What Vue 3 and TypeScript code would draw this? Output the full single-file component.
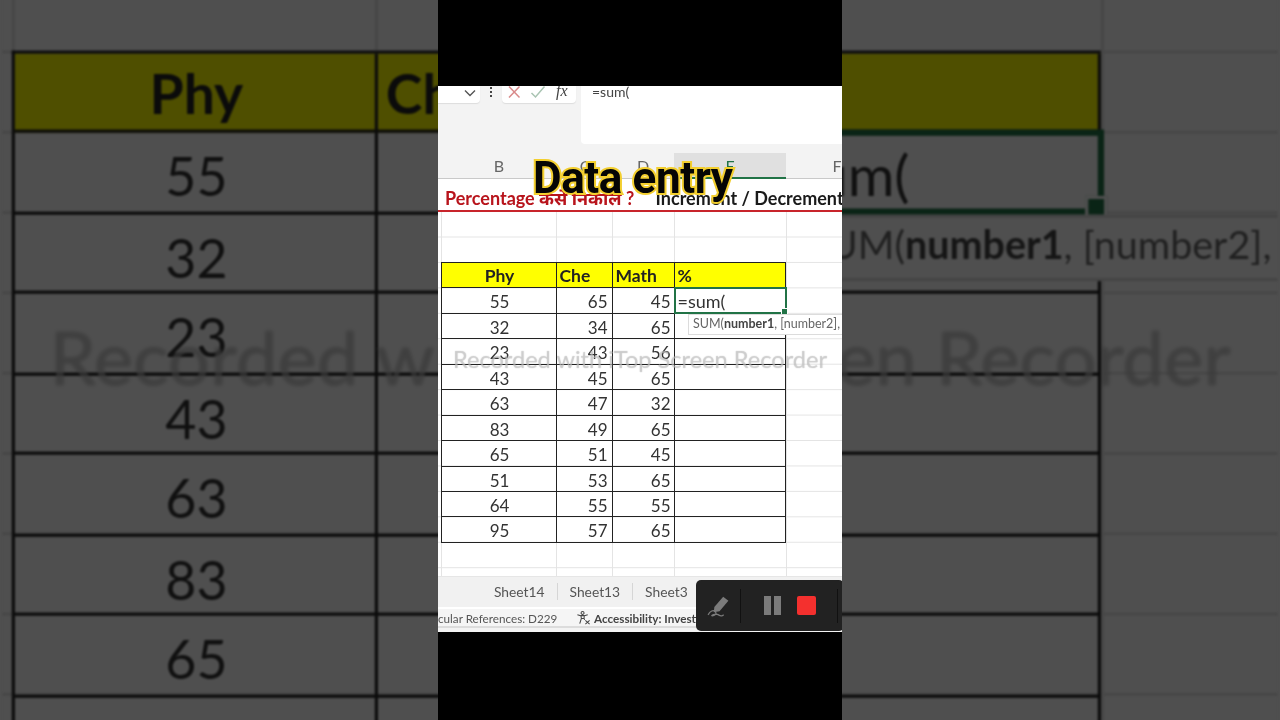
<script setup lang="ts">
interface Row { phy: number; che: number; math: number }
const rows: Row[] = [
  { phy: 55, che: 65, math: 45 },
  { phy: 32, che: 34, math: 65 },
  { phy: 23, che: 43, math: 56 },
  { phy: 43, che: 45, math: 65 },
  { phy: 63, che: 47, math: 32 },
  { phy: 83, che: 49, math: 65 },
  { phy: 65, che: 51, math: 45 },
  { phy: 51, che: 53, math: 65 },
  { phy: 64, che: 55, math: 55 },
  { phy: 95, che: 57, math: 65 },
]
const layers = ['back', 'front']
const columns = [
  { name: 'B', width: 118 },
  { name: 'C', width: 56 },
  { name: 'D', width: 62 },
  { name: 'E', width: 112 },
  { name: 'F', width: 102 },
]
const tabs = ['Sheet14', 'Sheet13', 'Sheet3']
</script>

<template>
  <div class="frame">
    <div v-for="layer in layers" :key="layer" class="phone" :class="layer">
      <div class="sheet">
        <div class="ribbon">
          <div class="name-box">
            <svg class="chev" viewBox="0 0 12 8" width="12" height="8"><path d="M1 1.5 6 6.5 11 1.5" fill="none" stroke="#555" stroke-width="1.4" /></svg>
          </div>
          <div class="dots"><i></i><i></i><i></i></div>
          <div class="fx-box">
            <svg viewBox="0 0 14 14" width="14" height="14"><path d="M2 1.5 12.5 12.5M12.5 1.5 2 12.5" stroke="#d98a8a" stroke-width="1.5" fill="none" /></svg>
            <svg viewBox="0 0 16 14" width="16" height="14"><path d="M1.5 8 5.5 12 14.5 1.5" stroke="#a9c4b2" stroke-width="1.5" fill="none" /></svg>
            <span class="fx">fx</span>
          </div>
          <div class="formula">=sum(</div>
        </div>
        <div class="col-heads">
          <div v-for="col in columns" :key="col.name" class="col-head" :class="{ on: col.name === 'E' }" :style="{ width: col.width + 'px' }">{{ col.name }}</div>
        </div>
        <div class="body">
          <div class="title"><span class="red">Percentage कैसे निकाले ?</span> Increment / Decrement</div>
          <div class="table">
            <div class="cell head center">Phy</div>
            <div class="cell head">Che</div>
            <div class="cell head">Math</div>
            <div class="cell head">%</div>
            <template v-for="(row, i) in rows" :key="row.phy + '-' + i">
              <div class="cell center">{{ row.phy }}</div>
              <div class="cell num">{{ row.che }}</div>
              <div class="cell num">{{ row.math }}</div>
              <div class="cell" :class="{ active: i === 0 }">
                <template v-if="i === 0">=sum(<span class="handle"></span></template>
              </div>
            </template>
          </div>
          <div class="tip">SUM(<b>number1</b>, [number2], [number3], ...)</div>
        </div>
        <div class="tabs">
          <div v-for="tab in tabs" :key="tab" class="tab">{{ tab }}</div>
        </div>
        <div class="status">
          <span class="refs">cular References: D229</span>
          <svg class="acc" viewBox="0 0 16 16" width="15" height="15"><path d="M7 1.5a1.6 1.6 0 1 1 0 3.2 1.6 1.6 0 0 1 0-3.2ZM1.5 5 5 6h4l3.5-1M5.3 6l.4 3L4 14.5M8.8 6l-.2 3 .6 1.5M5.7 9h2.9" fill="none" stroke="#444" stroke-width="1.1" /><path d="M10 11l4.5 4M14.5 11 10 15" stroke="#444" stroke-width="1.1" fill="none" /></svg>
          <b class="acc-text">Accessibility: Investigate</b>
        </div>
        <div class="mark">Recorded with iTop Screen Recorder</div>
        <div v-if="layer === 'front'" class="caption">Data entry</div>
        <div v-if="layer === 'front'" class="recorder">
          <svg class="pen" viewBox="0 0 24 24" width="25" height="25"><path d="M8 13.5 16.5 3.5 21.5 7.5 13 17.5l-5.5 1Z" fill="#7b7b7b" /><path d="M2 21c2-4 5-5 7-3s-1 4-3 4 3-3 6-1 3 1 5 0" fill="none" stroke="#7b7b7b" stroke-width="1.2" /></svg>
          <span class="rule"></span>
          <span class="pause"><i></i><i></i></span>
          <span class="stop"></span>
          <span class="rule end"></span>
        </div>
      </div>
    </div>
  </div>
</template>

<style>
html, body { margin: 0; background: #000; }
</style>

<style scoped>
.frame {
  position: relative;
  width: 1280px;
  height: 720px;
  overflow: hidden;
  background: #4f4f4f;
  font-family: Lato, "Noto Sans", "Liberation Sans", sans-serif;
}
.phone {
  position: absolute;
  left: 438px;
  top: 0;
  width: 404px;
  height: 720px;
  padding: 86px 0 88px;
  box-sizing: border-box;
}
.back {
  transform: scale(3.157);
  transform-origin: 202px 360px;
  filter: blur(0.4px) brightness(0.31);
}
.front {
  background: #000;
  filter: blur(0.25px);
}
.sheet {
  position: relative;
  height: 546px;
  background: #f3f3f3;
  overflow: hidden;
  display: flex;
  flex-direction: column;
}
.ribbon {
  height: 67px;
  flex: none;
  display: flex;
  align-items: flex-start;
}
.name-box {
  width: 42px;
  height: 17px;
  background: #fff;
  border-radius: 0 0 4px 0;
  box-shadow: 0 1px 1px #ddd;
  display: flex;
  align-items: center;
  justify-content: flex-end;
  padding: 0 4px 4px 0;
  box-sizing: border-box;
}
.dots {
  width: 22px;
  height: 16px;
  display: flex;
  flex-direction: column;
  align-items: center;
  justify-content: center;
  gap: 2px;
  padding-bottom: 4px;
  box-sizing: border-box;
}
.dots i { width: 2px; height: 2px; background: #444; }
.fx-box {
  width: 74px;
  height: 17px;
  background: #fff;
  border-radius: 0 0 4px 4px;
  box-shadow: 0 1px 1px #ddd;
  display: flex;
  align-items: center;
  gap: 9px;
  padding: 0 0 5px 5px;
  box-sizing: border-box;
}
.fx { font: italic 16px "Liberation Serif", serif; color: #444; margin-top: -2px; margin-left: 1px; }
.formula {
  margin-left: 5px;
  flex: 1;
  height: 58px;
  background: #fff;
  border-radius: 0 0 0 4px;
  padding-left: 11px;
  font-size: 14px;
  line-height: 12px;
  color: #444;
}
.col-heads {
  height: 25px;
  flex: none;
  display: flex;
  border-bottom: 1px solid #c9c9c9;
}
.col-head {
  flex: none;
  box-sizing: border-box;
  text-align: center;
  color: #666;
  font-size: 16px;
  line-height: 26px;
}
.col-head:first-child { padding-left: 4px; }
.col-head:nth-child(2) { padding-left: 2px; }
.col-head.on {
  background: #e0e0e0;
  color: #217346;
  border-bottom: 2px solid #217346;
  height: 26px;
}
.body {
  position: relative;
  height: 397px;
  flex: none;
  background-color: #fff;
  background-image:
    linear-gradient(#e4e4e4, #e4e4e4), linear-gradient(#e4e4e4, #e4e4e4),
    linear-gradient(#e4e4e4, #e4e4e4), linear-gradient(#e4e4e4, #e4e4e4),
    linear-gradient(#e4e4e4, #e4e4e4),
    linear-gradient(#e4e4e4 1px, transparent 1px);
  background-size: 1px 100%, 1px 100%, 1px 100%, 1px 100%, 1px 100%, 100% 25.45px;
  background-position: 3px 0, 118px 0, 174px 0, 236px 0, 348px 0, 0 6.65px;
  background-repeat: no-repeat, no-repeat, no-repeat, no-repeat, no-repeat, repeat;
}
.title {
  height: 31px;
  background: #fff;
  border-bottom: 2px solid #c8242b;
  padding-left: 7px;
  white-space: nowrap;
  overflow: hidden;
  font-size: 18px;
  font-weight: 700;
  line-height: 39px;
  color: #1a1a1a;
}
.red { color: #b8141c; padding-right: 17px; }
.table {
  margin: 50px 0 0 2.5px;
  width: 345.6px;
  display: grid;
  grid-template-columns: 115px 56px 62px 111.6px;
  grid-auto-rows: 25.45px;
  border-top: 1px solid #222;
  border-left: 1px solid #222;
  box-sizing: border-box;
  color: #333;
  font-size: 17px;
}
.cell {
  position: relative;
  border-right: 1px solid #222;
  border-bottom: 1px solid #222;
  box-sizing: border-box;
  padding: 0 4px 0 3px;
  line-height: 27px;
}
.cell:nth-child(4n+3) { padding-right: 3px; }
.head { background: #ffff00; font-weight: 700; color: #222; font-size: 17.5px; line-height: 26px; }
.center { text-align: center; padding: 0 1px 0 3px; }
.num { text-align: right; }
.active {
  margin: -1px -1px 0 -1px;
  border: 2px solid #217346;
  padding-left: 2px;
  font-size: 18px;
  line-height: 24px;
}
.handle {
  position: absolute;
  right: -3px;
  bottom: -3px;
  width: 5px;
  height: 5px;
  background: #217346;
  border: 1px solid #fff;
}
.tip {
  position: absolute;
  left: 250px;
  top: 135px;
  height: 19px;
  padding: 0 4px;
  background: #fff;
  border: 1px solid #dcdcdc;
  color: #666;
  font-size: 12.5px;
  line-height: 18px;
  white-space: nowrap;
}
.tip b { color: #444; }
.tabs {
  height: 31px;
  flex: none;
  display: flex;
  align-items: center;
  padding: 0 0 2px 44px;
  background: #f1f1f1;
  border-top: 1px solid #e6e6e6;
  box-sizing: border-box;
}
.tab {
  padding: 0 12px;
  font-size: 13.8px;
  line-height: 17px;
  color: #555;
  border-right: 1px solid #d6d6d6;
}
.tab:last-child { border-right: 0; }
.status {
  height: 21px;
  flex: none;
  display: flex;
  align-items: center;
  background: #f5f5f5;
  border-top: 2px solid #fff;
  border-bottom: 2px solid #dcdcdc;
  box-sizing: border-box;
  white-space: nowrap;
  font-size: 11.7px;
  color: #555;
}
.refs { width: 138px; flex: none; }
.acc { flex: none; margin-right: 3px; }
.acc-text { color: #444; }
.mark {
  position: absolute;
  left: 0;
  right: 0;
  top: 260px;
  text-align: center;
  font-size: 23.6px;
  line-height: 26px;
  white-space: nowrap;
  color: rgba(240, 240, 240, 0.42);
  text-shadow: 0 0 1px rgba(110, 110, 110, 0.55);
}
.caption {
  position: absolute;
  left: 95px;
  top: 68px;
  font-family: Roboto, "Liberation Sans", sans-serif;
  font-size: 44px;
  font-weight: 700;
  line-height: 48px;
  letter-spacing: -0.4px;
  white-space: nowrap;
  color: #050505;
  -webkit-text-stroke: 4px #f3cf2f;
  paint-order: stroke fill;
}
.recorder {
  position: absolute;
  right: -2px;
  top: 494px;
  width: 148px;
  height: 51px;
  display: flex;
  align-items: center;
  background: #222;
  border-radius: 5px;
  box-sizing: border-box;
  padding-left: 10px;
}
.pen { flex: none; }
.rule { width: 1px; height: 34px; background: #111; margin-left: 9px; flex: none; }
.rule.end { margin-left: 21px; }
.pause { display: flex; gap: 3px; margin-left: 23px; }
.pause i { width: 7px; height: 19px; background: #7b7b7b; }
.stop {
  width: 19px;
  height: 19px;
  margin-left: 16px;
  background: #f4302e;
  border-radius: 2px;
}
</style>
